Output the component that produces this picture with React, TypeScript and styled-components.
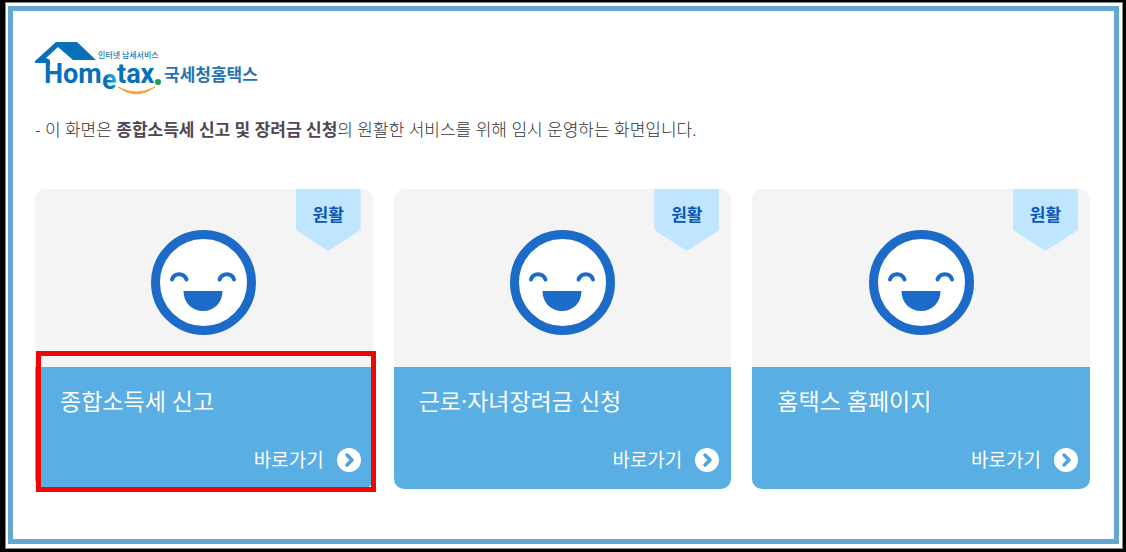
import React from "react";
import styled, { createGlobalStyle } from "styled-components";

const GlobalStyle = createGlobalStyle`
  *, *::before, *::after { box-sizing: border-box; }
  body {
    margin: 0;
    background: #000;
    color: #444;
    font-family: "Noto Sans", "Noto Sans CJK KR", sans-serif;
  }
`;

const Page = styled.div`
  display: flex;
  min-height: 100vh;
  padding: 2px 3px 3px 5px;
  background: #000;
`;

const Sheet = styled.div`
  display: flex;
  flex: 1;
  padding: 3px 3px 4px 2px;
  border: 1px solid #8a8a8a;
  background: #fff;
`;

const Frame = styled.main`
  flex: 1;
  padding: 29px 24px 24px 22px;
  border: 5px solid #65a6d2;
`;

const LogoLink = styled.a`
  display: block;
  width: 226px;
  height: 58px;
`;

const Notice = styled.p`
  margin: 19px 0 0;
  font-size: 17px;
  line-height: 26px;
  font-weight: 300;
  color: #333;

  strong {
    font-weight: 700;
    color: #4e4652;
  }
`;

const CardGrid = styled.div`
  display: grid;
  grid-template-columns: repeat(3, 1fr);
  gap: 21px;
  margin-top: 46px;
`;

const Card = styled.article`
  position: relative;
`;

const StatusPanel = styled.div`
  display: flex;
  justify-content: center;
  padding: 41px 0 32px;
  border-radius: 10px 10px 0 0;
  background: #f4f4f4;
`;

const Ribbon = styled.span`
  position: absolute;
  top: 0;
  right: 12px;
  width: 65px;
  height: 62px;
  padding-top: 14px;
  background: #c0e6ff;
  clip-path: polygon(0 0, 100% 0, 100% 41px, 50% 100%, 0 41px);
  color: #0b57b7;
  font-size: 17px;
  line-height: 24px;
  font-weight: 700;
  text-align: center;
`;

const ActionPanel = styled.div`
  display: flex;
  flex-direction: column;
  justify-content: space-between;
  min-height: 122px;
  padding: 18px 12px 17px 25px;
  border-radius: 0 0 10px 10px;
  background: #59aee3;
  color: #fff;
`;

const CardTitle = styled.h2`
  margin: 0;
  font-size: 23px;
  line-height: 32px;
  font-weight: 400;
`;

const GoLink = styled.a`
  display: flex;
  align-items: center;
  align-self: flex-end;
  gap: 13px;
  color: #fff;
  font-size: 19px;
  line-height: 24px;
  text-decoration: none;
`;

const Highlight = styled.div`
  position: absolute;
  top: 162px;
  right: -3px;
  bottom: -3px;
  left: 1px;
  border: 5px solid #f20505;
  pointer-events: none;
`;

const Logo = () => (
  <svg width="226" height="58" viewBox="0 0 226 58" role="img" aria-label="Hometax 국세청홈택스">
    <defs>
      <linearGradient id="e-fill" x1="0" y1="1" x2="1" y2="0">
        <stop offset="0.4" stopColor="#0870b8" />
        <stop offset="0.75" stopColor="#16b4e6" />
      </linearGradient>
    </defs>
    <path d="M0 23V21L21 2H42L61 20H38L23 7 11 18 15 20V25H11V23Z" fill="#0870b8" />
    <g fontFamily="Roboto, sans-serif" fontSize="27" fontWeight="700" fill="#0870b8">
      <text x="9" y="43">Hom</text>
      <text x="67" y="49" fill="url(#e-fill)">e</text>
      <text x="82" y="43">tax</text>
    </g>
    <circle cx="123" cy="42" r="3" fill="#12a64b" />
    <path d="M83 47Q101 61 120 47Q101 57 83 47Z" fill="#f3a638" stroke="#f3a638" />
    <g fontFamily="'Noto Sans CJK KR', sans-serif">
      <text x="63" y="18" fontSize="8" fontWeight="500" fill="#2a78b0">인터넷 납세서비스</text>
      <text x="129" y="41" fontSize="17" fontWeight="700" fill="#2474b3">국세청홈택스</text>
    </g>
  </svg>
);

const SmileFace = () => (
  <svg width="105" height="105" viewBox="0 0 105 105" aria-hidden="true">
    <circle cx="52.5" cy="52.5" r="48" fill="#fff" stroke="#1d6bc8" strokeWidth="9" />
    <g fill="none" stroke="#1d6bc8" strokeWidth="4" strokeLinecap="round">
      <path d="M21 49.500C23 42.500 33 42.500 35.500 49.500" />
      <path d="M68.500 49.500C71 42.500 81 42.500 83 49.500" />
    </g>
    <path d="M32.500 61H71.500C71.500 73 63 81 52 81S32.500 73 32.500 61Z" fill="#1d6bc8" />
  </svg>
);

const ArrowBadge = () => (
  <svg width="24" height="24" viewBox="0 0 24 24" aria-hidden="true">
    <circle cx="12" cy="12" r="12" fill="#fff" />
    <path d="M10 7 15 12 10 17" fill="none" stroke="#4ba3dc" strokeWidth="3.500" strokeLinecap="round" strokeLinejoin="round" />
  </svg>
);

interface Service {
  title: string;
  status: string;
  highlighted?: boolean;
}

const services: Service[] = [
  { title: "종합소득세 신고", status: "원활", highlighted: true },
  { title: "근로·자녀장려금 신청", status: "원활" },
  { title: "홈택스 홈페이지", status: "원활" },
];

const ServiceCard = ({ title, status, highlighted }: Service) => (
  <Card>
    <StatusPanel>
      <SmileFace />
    </StatusPanel>
    <Ribbon>{status}</Ribbon>
    <ActionPanel>
      <CardTitle>{title}</CardTitle>
      <GoLink href="#">
        바로가기
        <ArrowBadge />
      </GoLink>
    </ActionPanel>
    {highlighted && <Highlight />}
  </Card>
);

export default function App() {
  return (
    <Page>
      <GlobalStyle />
      <Sheet>
        <Frame>
          <LogoLink href="#">
            <Logo />
          </LogoLink>
          <Notice>
            - 이 화면은 <strong>종합소득세 신고 및 장려금 신청</strong>의 원활한 서비스를 위해 임시 운영하는 화면입니다.
          </Notice>
          <CardGrid>
            {services.map((service) => (
              <ServiceCard key={service.title} {...service} />
            ))}
          </CardGrid>
        </Frame>
      </Sheet>
    </Page>
  );
}
